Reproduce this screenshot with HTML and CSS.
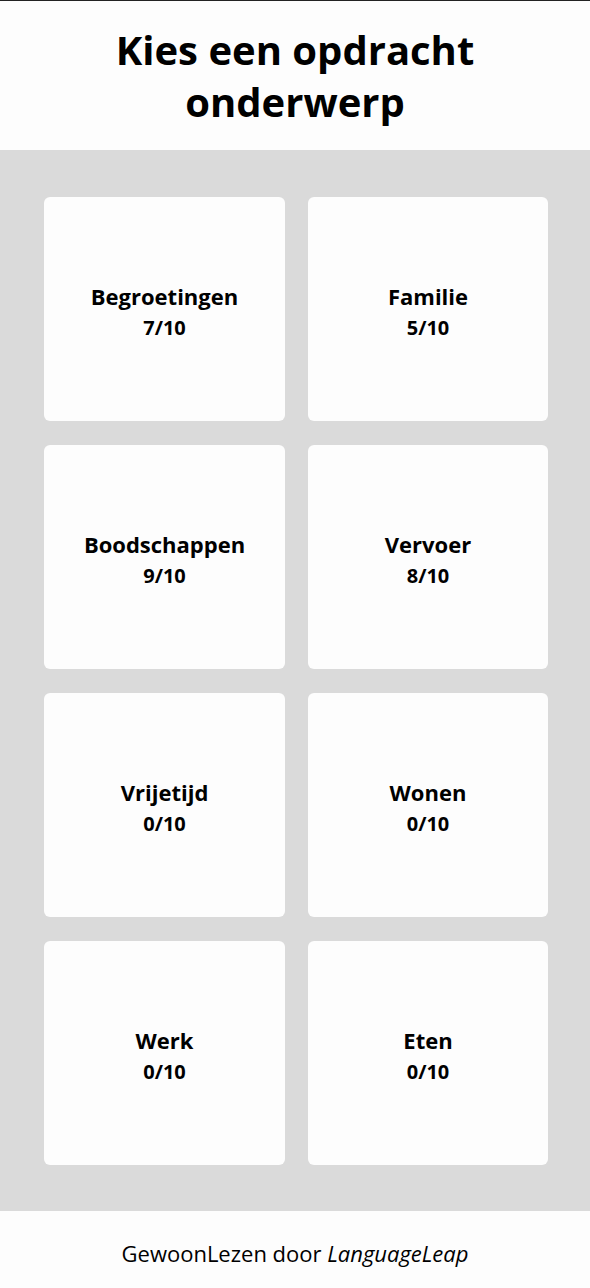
FILE: index.html
```html
<!DOCTYPE html>
<html lang="nl">
<head>
<meta charset="utf-8">
<title>Kies een opdracht onderwerp</title>
<link rel="stylesheet" href="styles.css">
</head>
<body>
<div class="page">
  <header class="header">
    <h1 class="title">Kies een opdracht onderwerp</h1>
  </header>
  <main class="content">
    <div class="grid">
      <a class="card"><span class="card-name">Begroetingen</span><span class="card-score">7/10</span></a>
      <a class="card"><span class="card-name">Familie</span><span class="card-score">5/10</span></a>
      <a class="card"><span class="card-name">Boodschappen</span><span class="card-score">9/10</span></a>
      <a class="card"><span class="card-name">Vervoer</span><span class="card-score">8/10</span></a>
      <a class="card"><span class="card-name">Vrijetijd</span><span class="card-score">0/10</span></a>
      <a class="card"><span class="card-name">Wonen</span><span class="card-score">0/10</span></a>
      <a class="card"><span class="card-name">Werk</span><span class="card-score">0/10</span></a>
      <a class="card"><span class="card-name">Eten</span><span class="card-score">0/10</span></a>
    </div>
  </main>
  <footer class="footer">
    <p class="footer-text">GewoonLezen door <em>LanguageLeap</em></p>
  </footer>
</div>
</body>
</html>
```
FILE: styles.css
```css
* { box-sizing: border-box; }
html, body {
  margin: 0;
  padding: 0;
  background: #fdfdfd;
}
body {
  font-family: "Open Sans", "Noto Sans", sans-serif;
  color: #000;
}
.page {
  display: flex;
  flex-direction: column;
  min-height: 1288px;
  border-top: 1px solid #222;
}
.header {
  height: 149px;
  display: flex;
  align-items: center;
  justify-content: center;
  background: #fdfdfd;
}
.title {
  margin: 0;
  font-size: 40px;
  line-height: 52px;
  font-weight: 700;
  text-align: center;
  width: 420px;
}
.content {
  background: #dadada;
  padding: 47px 42px 46px 44px;
}
.grid {
  display: grid;
  grid-template-columns: 241px 240px;
  column-gap: 23px;
  row-gap: 24px;
}
.card {
  height: 224px;
  background: #fdfdfd;
  border-radius: 6px;
  display: flex;
  flex-direction: column;
  align-items: center;
  justify-content: center;
  padding-top: 6px;
}
.card-name {
  font-size: 22px;
  font-weight: 700;
  line-height: 32px;
}
.card-score {
  font-size: 20px;
  font-weight: 700;
  line-height: 32px;
}
.footer {
  flex: 1;
  display: flex;
  align-items: center;
  justify-content: center;
  background: #fdfdfd;
}
.footer-text {
  margin: 0;
  font-size: 22px;
  padding-top: 6px;
}
.footer-text em { font-style: italic; }
```
